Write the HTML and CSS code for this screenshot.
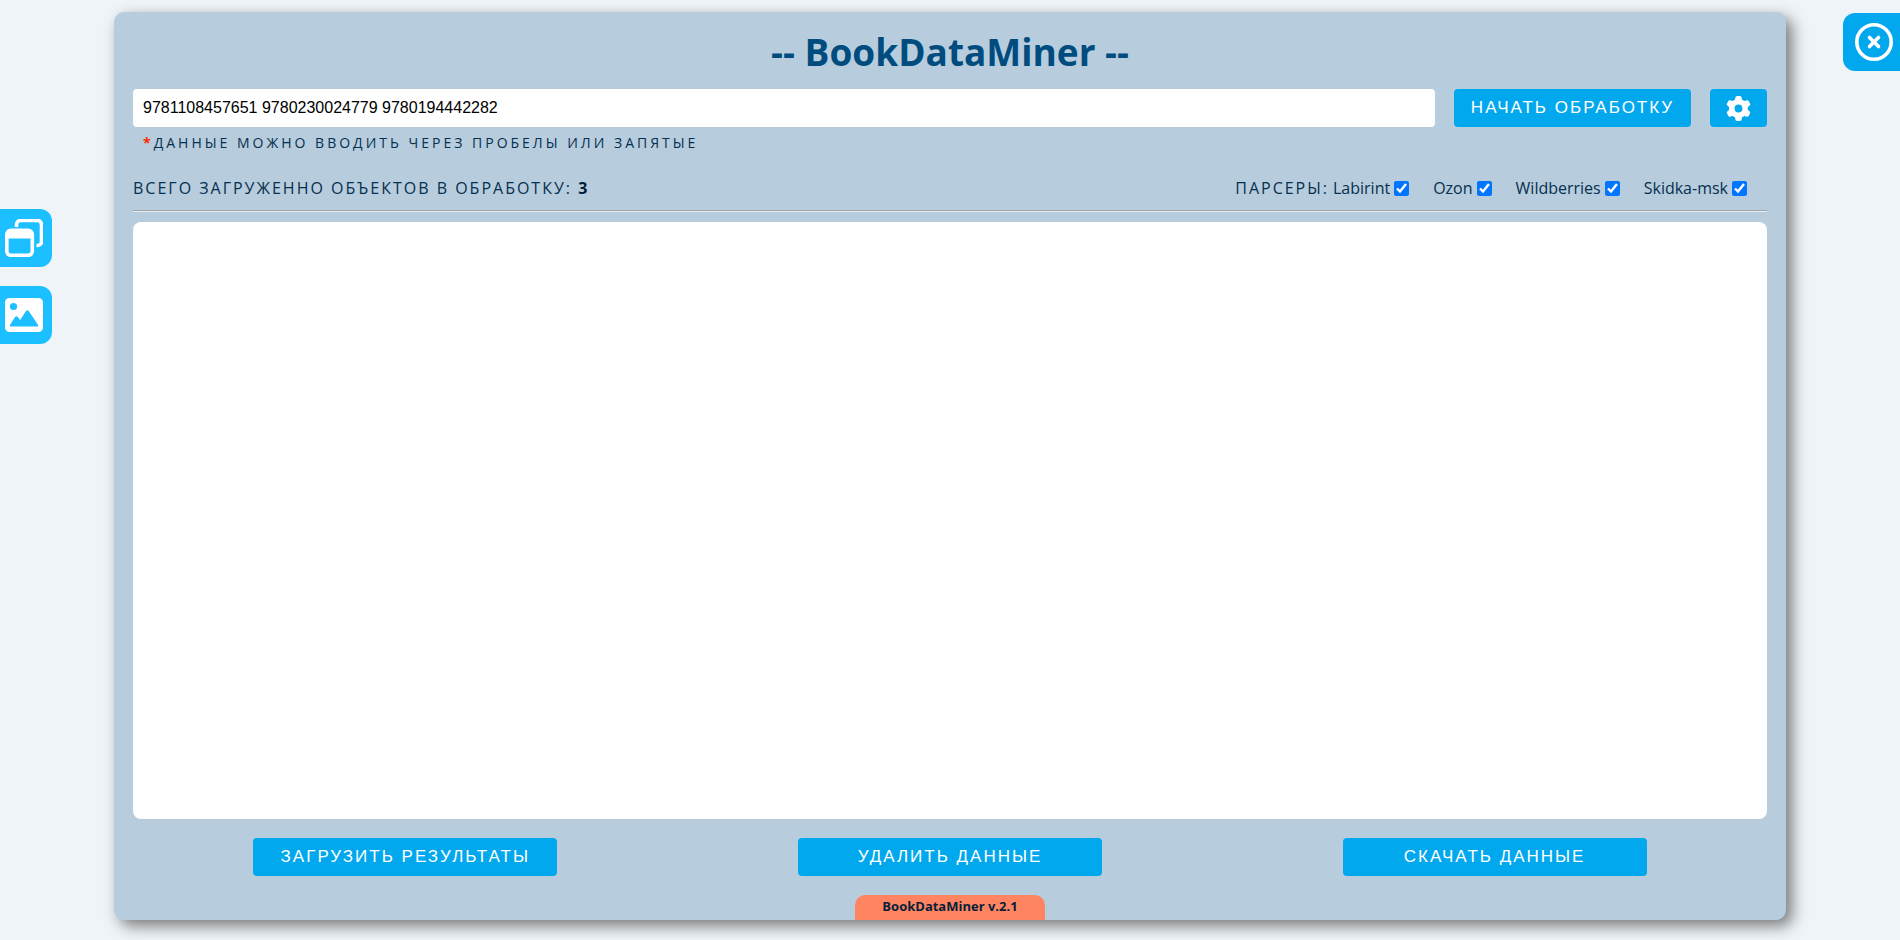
FILE: index.html
```html
<!DOCTYPE html>
<html lang="ru">
<head>
<meta charset="utf-8">
<title>BookDataMiner</title>
<link rel="stylesheet" href="styles.css">
</head>
<body>
<nav class="side">
  <button class="tab tab-left" type="button" aria-label="Окна">
    <svg class="tab-icon" viewBox="0 0 38 38" fill="none" stroke="#fff" stroke-width="3.6">
      <path d="M11.500 8V5.500a4 4 0 0 1 4-4h17a4 4 0 0 1 4 4v17a4 4 0 0 1-4 4h-1" />
      <rect x="1.800" y="11.300" width="25.500" height="25" rx="4" />
      <path d="M2 12h25v7.500H2z" fill="#fff" stroke="none" />
    </svg>
  </button>
  <button class="tab tab-left" type="button" aria-label="Изображения">
    <svg class="tab-icon" viewBox="0 0 38 38">
      <rect x="0" y="2" width="38" height="34" rx="4.500" fill="#fff" />
      <circle cx="8.500" cy="10.500" r="3.600" fill="#1cbfff" />
      <path d="M6 30.500c-1 0-1.500-1-1-1.800l5-7.500c.8-1.100 2-1.100 2.700-.2l2.500 3 5.800-9c.8-1.100 2-1.100 2.700 0l9.300 13.700c.5.800 0 1.800-1 1.800z" fill="#1cbfff" />
    </svg>
  </button>
</nav>

<main class="panel">
  <h1 class="title">-- BookDataMiner --</h1>
  <form class="search">
    <input class="search-input" type="text" aria-label="ISBN" value="9781108457651 9780230024779 9780194442282">
    <button class="btn btn-start" type="button">НАЧАТЬ ОБРАБОТКУ</button>
    <button class="btn btn-gear" type="button" aria-label="Настройки">
      <svg class="gear-icon" viewBox="0 0 512 512" fill="#fff"><path d="M495.900 166.600c3.200 8.700.5 18.400-6.400 24.600l-43.300 39.400c1.100 8.300 1.700 16.800 1.700 25.400s-.6 17.100-1.700 25.400l43.300 39.400c6.900 6.200 9.600 15.900 6.400 24.600-4.400 11.900-9.700 23.300-15.800 34.300l-4.700 8.100c-6.600 11-14 21.400-22.100 31.200-5.900 7.200-15.700 9.600-24.500 6.800l-55.700-17.700c-13.400 10.300-28.200 18.900-44 25.400l-12.500 57.100c-2 9.100-9 16.300-18.200 17.800-13.800 2.300-28 3.500-42.500 3.500s-28.700-1.200-42.500-3.500c-9.200-1.500-16.200-8.700-18.200-17.800l-12.500-57.100c-15.800-6.500-30.600-15.100-44-25.400l-55.600 17.800c-8.800 2.800-18.600.3-24.500-6.800-8.100-9.800-15.500-20.200-22.100-31.200l-4.700-8.100c-6.100-11-11.400-22.400-15.800-34.300-3.200-8.700-.5-18.400 6.400-24.600l43.300-39.400C64.600 273.100 64 264.600 64 256s.6-17.100 1.700-25.400l-43.300-39.400c-6.900-6.200-9.600-15.900-6.400-24.600 4.400-11.900 9.700-23.300 15.800-34.300l4.700-8.100c6.600-11 14-21.400 22.100-31.200 5.900-7.200 15.700-9.600 24.500-6.800l55.700 17.700c13.400-10.300 28.200-18.900 44-25.400l12.500-57.100c2-9.100 9-16.300 18.200-17.800C227.300 1.200 241.500 0 256 0s28.700 1.200 42.500 3.500c9.200 1.500 16.200 8.700 18.200 17.800l12.500 57.100c15.800 6.500 30.600 15.100 44 25.400l55.700-17.700c8.800-2.800 18.600-.3 24.500 6.800 8.100 9.800 15.500 20.200 22.100 31.200l4.700 8.100c6.100 11 11.400 22.400 15.800 34.300zM256 336a80 80 0 1 0 0-160 80 80 0 1 0 0 160z" /></svg>
    </button>
  </form>
  <p class="hint"><span class="star">*</span>ДАННЫЕ МОЖНО ВВОДИТЬ ЧЕРЕЗ ПРОБЕЛЫ ИЛИ ЗАПЯТЫЕ</p>
  <div class="status">
    <p class="total">ВСЕГО ЗАГРУЖЕННО ОБЪЕКТОВ В ОБРАБОТКУ: <b class="count">3</b></p>
    <div class="parsers">
      <span class="caption">ПАРСЕРЫ:</span>
      <label class="parser">Labirint<input class="check" type="checkbox" checked></label>
      <label class="parser">Ozon<input class="check" type="checkbox" checked></label>
      <label class="parser">Wildberries<input class="check" type="checkbox" checked></label>
      <label class="parser">Skidka-msk<input class="check" type="checkbox" checked></label>
    </div>
  </div>
  <section class="results" aria-label="Результаты"></section>
  <div class="actions">
    <button class="btn btn-action" type="button">ЗАГРУЗИТЬ РЕЗУЛЬТАТЫ</button>
    <button class="btn btn-action" type="button">УДАЛИТЬ ДАННЫЕ</button>
    <button class="btn btn-action" type="button">СКАЧАТЬ ДАННЫЕ</button>
  </div>
  <footer class="version">BookDataMiner v.2.1</footer>
</main>

<button class="tab tab-close" type="button" aria-label="Закрыть">
  <svg class="tab-icon" viewBox="0 0 38 38" fill="none" stroke="#fff" stroke-linecap="round">
    <circle cx="19" cy="19" r="17.200" stroke-width="3.600" />
    <path d="M14.500 14.500l9 9M23.500 14.500l-9 9" stroke-width="3.600" />
  </svg>
</button>
</body>
</html>
```

FILE: styles.css
```css
* {
  box-sizing: border-box;
}

body {
  margin: 0;
  height: 100vh;
  padding: 12px 0 20px;
  display: flex;
  justify-content: center;
  background: #eff4f8;
  color: #06304f;
  font: 16px/24px "Open Sans", "Noto Sans", sans-serif;
  overflow: hidden;
}

.panel {
  width: 88%;
  padding: 0 19px;
  display: flex;
  flex-direction: column;
  background: #b7ccdd;
  border-radius: 10px;
  box-shadow: 6px 6px 15px rgba(0, 0, 0, 0.5);
}

.title {
  margin: 14px 0 11px;
  font-size: 37px;
  line-height: 52px;
  text-align: center;
  color: #004c7f;
}

.search {
  display: flex;
  gap: 19px;
}

.search-input {
  flex: 1;
  min-width: 0;
  height: 38px;
  padding: 0 10px;
  border: 0;
  border-radius: 4px;
  background: #fff;
  color: #000;
  font: 16px "Liberation Sans", sans-serif;
}

.btn {
  height: 38px;
  padding: 0;
  border: 0;
  border-radius: 4px;
  background: #02a8ee;
  color: #fff;
  font: 17px "Liberation Sans", sans-serif;
  letter-spacing: 2px;
}

.btn-start {
  width: 237px;
}

.btn-gear {
  width: 57px;
  display: flex;
  align-items: center;
  justify-content: center;
}

.gear-icon {
  width: 25px;
  height: 25px;
}

.hint {
  margin: 4px 0 0 10px;
  font-size: 14px;
  letter-spacing: 3px;
}

.star {
  color: #ff2a00;
  font-weight: 700;
}

.status {
  margin-top: 21px;
  padding-bottom: 10px;
  display: flex;
  justify-content: space-between;
  align-items: center;
  border-bottom: 1px solid #9ea3a7;
  box-shadow: 0 1px 0 #e8edf1;
}

.total {
  margin: 0;
  letter-spacing: 2px;
}

.count {
  color: #02203a;
}

.parsers {
  display: flex;
  align-items: center;
  padding-right: 20px;
}

.caption {
  margin-right: 4px;
  letter-spacing: 2px;
}

.parser {
  display: flex;
  align-items: center;
  gap: 4px;
}

.parser + .parser {
  margin-left: 24px;
}

.check {
  width: 15px;
  height: 15px;
  margin: 0;
  accent-color: #0075ff;
}

.results {
  flex: 1;
  margin-top: 11px;
  background: #fff;
  border-radius: 8px;
}

.actions {
  margin: 19px 0;
  display: flex;
  justify-content: space-around;
}

.btn-action {
  width: 304px;
}

.version {
  align-self: center;
  width: 190px;
  height: 25px;
  border-radius: 10px 10px 0 0;
  background: #ff8562;
  color: #06203a;
  font-size: 13px;
  font-weight: 700;
  line-height: 23px;
  text-align: center;
}

.side {
  position: fixed;
  left: 0;
  top: 209px;
  display: flex;
  flex-direction: column;
  gap: 19px;
}

.tab {
  height: 58px;
  border: 0;
  display: flex;
  align-items: center;
}

.tab-left {
  width: 52px;
  padding: 0 0 0 5px;
  border-radius: 0 12px 12px 0;
  background: #1cbfff;
}

.tab-close {
  position: fixed;
  top: 13px;
  right: 0;
  width: 57px;
  padding: 0 0 0 12px;
  border-radius: 12px 0 0 12px;
  background: #02a8ee;
}

.tab-icon {
  width: 38px;
  height: 38px;
}
```
